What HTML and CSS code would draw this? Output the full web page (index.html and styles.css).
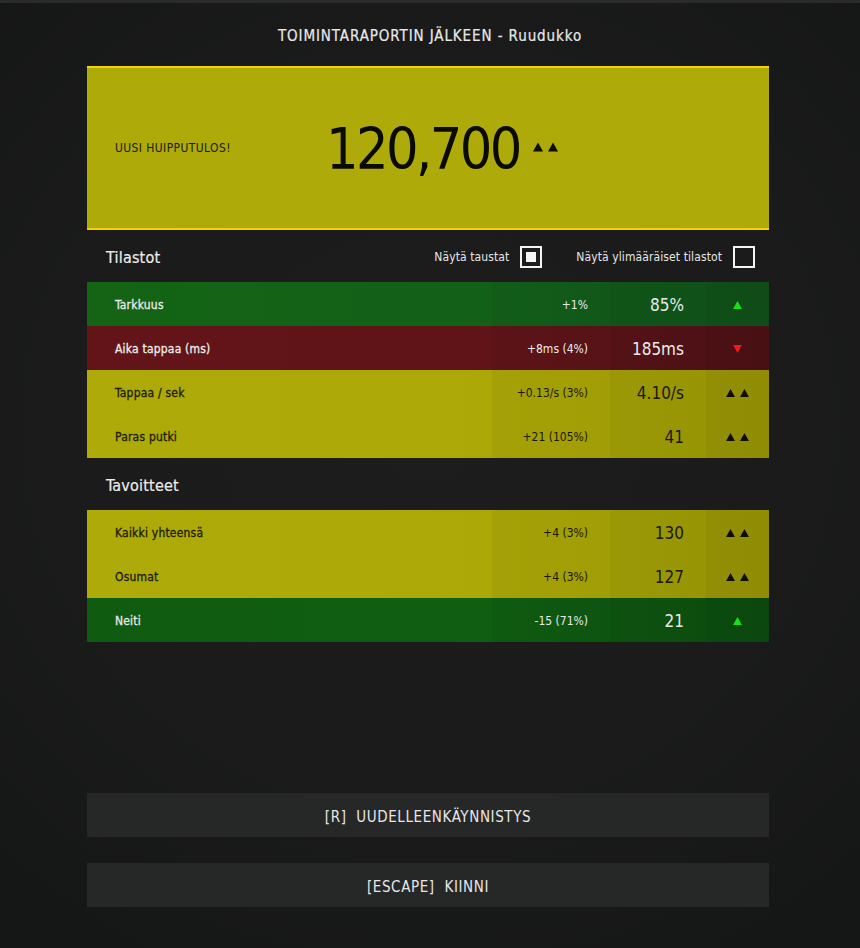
FILE: index.html
```html
<!DOCTYPE html>
<html lang="fi">
<head>
<meta charset="utf-8">
<title>Toimintaraportti</title>
<link rel="stylesheet" href="styles.css">
</head>
<body>
<div class="topbar"></div>
<header class="title">TOIMINTARAPORTIN JÄLKEEN - Ruudukko</header>
<main class="panel">
  <section class="banner">
    <div class="banner-label">UUSI HUIPPUTULOS!</div>
    <div class="banner-score">120,700</div>
    <div class="tri-pair banner-tris">
      <svg class="tri" viewBox="0 0 10 9"><polygon points="5,0 10,9 0,9"/></svg>
      <svg class="tri" viewBox="0 0 10 9"><polygon points="5,0 10,9 0,9"/></svg>
    </div>
  </section>

  <div class="section-head">
    <span class="section-title">Tilastot</span>
    <div class="toggles">
      <label class="toggle">Näytä taustat <span class="box checked"><span class="dot"></span></span></label>
      <label class="toggle">Näytä ylimääräiset tilastot <span class="box"></span></label>
    </div>
  </div>

  <div class="row green">
    <div class="c-label">Tarkkuus</div>
    <div class="c-delta">+1%</div>
    <div class="c-value">85%</div>
    <div class="c-arrow"><svg class="tri up-green" viewBox="0 0 10 9"><polygon points="5,0 10,9 0,9"/></svg></div>
  </div>
  <div class="row red">
    <div class="c-label">Aika tappaa (ms)</div>
    <div class="c-delta">+8ms (4%)</div>
    <div class="c-value">185ms</div>
    <div class="c-arrow"><svg class="tri down-red" viewBox="0 0 10 9"><polygon points="0,0 10,0 5,9"/></svg></div>
  </div>
  <div class="row yellow">
    <div class="c-label">Tappaa / sek</div>
    <div class="c-delta">+0.13/s (3%)</div>
    <div class="c-value">4.10/s</div>
    <div class="c-arrow tri-pair"><svg class="tri" viewBox="0 0 10 9"><polygon points="5,0 10,9 0,9"/></svg><svg class="tri" viewBox="0 0 10 9"><polygon points="5,0 10,9 0,9"/></svg></div>
  </div>
  <div class="row yellow">
    <div class="c-label">Paras putki</div>
    <div class="c-delta">+21 (105%)</div>
    <div class="c-value">41</div>
    <div class="c-arrow tri-pair"><svg class="tri" viewBox="0 0 10 9"><polygon points="5,0 10,9 0,9"/></svg><svg class="tri" viewBox="0 0 10 9"><polygon points="5,0 10,9 0,9"/></svg></div>
  </div>

  <div class="section-head">
    <span class="section-title">Tavoitteet</span>
  </div>

  <div class="row yellow">
    <div class="c-label">Kaikki yhteensä</div>
    <div class="c-delta">+4 (3%)</div>
    <div class="c-value">130</div>
    <div class="c-arrow tri-pair"><svg class="tri" viewBox="0 0 10 9"><polygon points="5,0 10,9 0,9"/></svg><svg class="tri" viewBox="0 0 10 9"><polygon points="5,0 10,9 0,9"/></svg></div>
  </div>
  <div class="row yellow">
    <div class="c-label">Osumat</div>
    <div class="c-delta">+4 (3%)</div>
    <div class="c-value">127</div>
    <div class="c-arrow tri-pair"><svg class="tri" viewBox="0 0 10 9"><polygon points="5,0 10,9 0,9"/></svg><svg class="tri" viewBox="0 0 10 9"><polygon points="5,0 10,9 0,9"/></svg></div>
  </div>
  <div class="row green dark">
    <div class="c-label">Neiti</div>
    <div class="c-delta">-15 (71%)</div>
    <div class="c-value">21</div>
    <div class="c-arrow"><svg class="tri up-green" viewBox="0 0 10 9"><polygon points="5,0 10,9 0,9"/></svg></div>
  </div>

  <div class="actions">
    <button class="btn">[R]&nbsp; UUDELLEENKÄYNNISTYS</button>
    <button class="btn">[ESCAPE]&nbsp; KIINNI</button>
  </div>
</main>
</body>
</html>
```

FILE: styles.css
```css
* { box-sizing: border-box; }

html, body {
  margin: 0;
  height: 100%;
}

body {
  background: radial-gradient(ellipse 75% 65% at 50% 45%, #1d1d1d 0%, #1b1b1b 55%, #151616 100%);
  background-color: #1a1a1a;
  font-family: "DejaVu Sans Condensed", "DejaVu Sans", sans-serif;
  color: #e6e6e6;
  min-height: 948px;
}

.topbar {
  height: 3px;
  background: #2b2b2b;
}

.title {
  height: 63px;
  display: flex;
  align-items: center;
  justify-content: center;
  font-size: 15px;
  letter-spacing: 0.9px;
  color: #e8e8e8;
  padding-top: 2px;
  -webkit-text-stroke: 0.2px currentColor;
}

.panel {
  width: 682px;
  margin-left: 87px;
}

.banner {
  height: 164px;
  background: #adaa0a;
  border-top: 2px solid #f2d300;
  border-bottom: 2px solid #f2d300;
  display: flex;
  align-items: center;
  color: #111;
}

.banner-label {
  width: 239px;
  padding-left: 28px;
  font-size: 12px;
  letter-spacing: 0.4px;
  color: #1c1a00;
}

.banner-score {
  font-size: 57px;
  letter-spacing: -2.6px;
  color: #0a0a00;
  line-height: 1;
  margin-top: 3px;
}

.banner-tris {
  margin-left: 13px;
  margin-bottom: 3px;
  gap: 4px;
}

.banner-tris .tri {
  width: 10px;
  height: 10px;
}

.tri-pair {
  display: flex;
  gap: 5px;
  align-items: center;
  justify-content: center;
}

.tri {
  width: 9px;
  height: 8px;
  display: block;
  fill: #0d0d00;
}

.tri.up-green { fill: #18e018; }
.tri.down-red { fill: #f01a1a; }

.section-head {
  height: 52px;
  display: flex;
  align-items: center;
  justify-content: space-between;
  padding: 2px 14px 0 19px;
}

.section-title {
  font-size: 16px;
  color: #ececec;
  letter-spacing: 0.2px;
  -webkit-text-stroke: 0.2px currentColor;
}

.toggles {
  display: flex;
  align-items: center;
  gap: 34px;
}

.toggle {
  display: flex;
  align-items: center;
  gap: 11px;
  font-size: 12px;
  letter-spacing: 0.1px;
  color: #e6e6e6;
}

.box {
  width: 22px;
  height: 22px;
  border: 2px solid #f4f4f4;
  display: flex;
  align-items: center;
  justify-content: center;
}

.box .dot {
  width: 10px;
  height: 10px;
  background: #f4f4f4;
}

.row {
  height: 44px;
  display: grid;
  grid-template-columns: 405px 118px 96px 63px;
  align-items: stretch;
  font-size: 12px;
}

.row > div {
  display: flex;
  align-items: center;
  padding-top: 2px;
}

.c-label {
  padding-left: 28px;
  letter-spacing: 0.2px;
  -webkit-text-stroke: 0.3px currentColor;
}

.c-delta {
  justify-content: flex-end;
  padding-right: 22px;
  background: rgba(0, 0, 0, 0.04);
}

.c-value {
  justify-content: flex-end;
  padding-right: 22px;
  font-size: 17px;
  background: rgba(0, 0, 0, 0.07);
}

.c-arrow {
  justify-content: center;
  background: rgba(0, 0, 0, 0.11);
}

.row.green {
  background: linear-gradient(90deg, #146414 0%, #13601a 60%, #11561a 100%);
  color: #e8e8e8;
}

.row.green.dark {
  background: linear-gradient(90deg, #0f5c10 0%, #105e12 60%, #0c5010 100%);
}

.row.red {
  background: linear-gradient(90deg, #631418 0%, #601418 60%, #521317 100%);
  color: #ececec;
}

.row.yellow {
  background: linear-gradient(90deg, #adaa0a 0%, #aba808 60%, #a29f06 100%);
  color: #1a1800;
}

.row.yellow .c-label { color: #1e1c00; }

.actions {
  margin-top: 151px;
  display: flex;
  flex-direction: column;
  gap: 26px;
}

.btn {
  height: 44px;
  width: 100%;
  border: 0;
  background: #262727;
  color: #e6e6e6;
  font-family: inherit;
  font-size: 15px;
  letter-spacing: 0.6px;
  padding: 3px 0 0;
  cursor: pointer;
}
```
